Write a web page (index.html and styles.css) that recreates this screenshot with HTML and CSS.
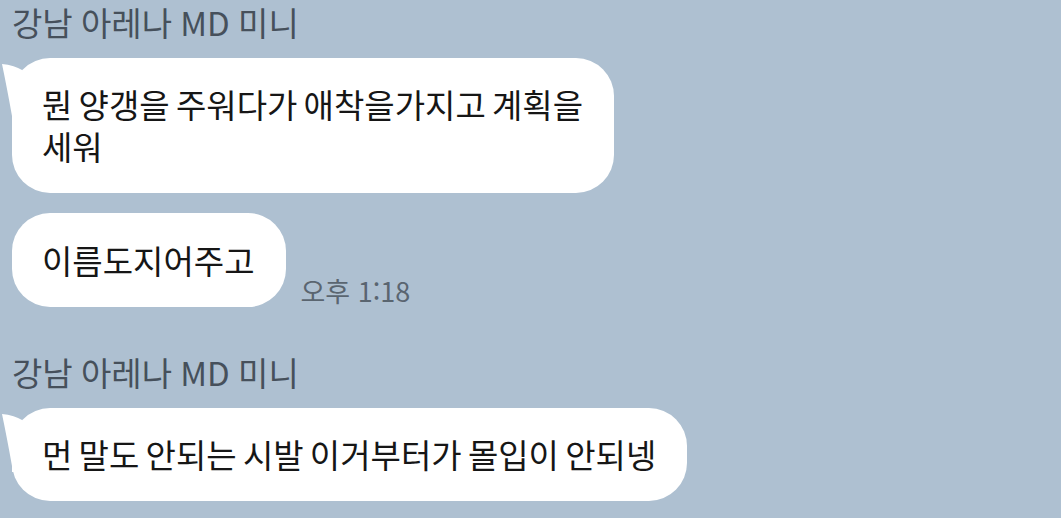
FILE: index.html
```html
<!DOCTYPE html>
<html lang="ko">
<head>
    <meta charset="UTF-8">
    <meta name="viewport" content="width=device-width, initial-scale=1.0">
    <title>채팅</title>
    <link rel="stylesheet" href="styles.css">
</head>
<body>

    <div class="chat">
        <div class="group">
            <div class="sender">강남 아레나 MD 미니</div>
            <div class="row">
                <div class="bubble first">
                    <svg class="tail" viewBox="0 0 40 70" width="40" height="70"><path d="M2 6 Q14 7 24 13 L34 34 L14 64 L12 64 L12 58 Q7 30 2 6 Z" fill="#fff"/></svg>
                    뭔 양갱을 주워다가 애착을가지고 계획을<br>세워
                </div>
            </div>
            <div class="row">
                <div class="bubble">이름도지어주고</div>
                <span class="time">오후 1:18</span>
            </div>
        </div>

        <div class="group">
            <div class="sender">강남 아레나 MD 미니</div>
            <div class="row">
                <div class="bubble first">
                    <svg class="tail" viewBox="0 0 40 70" width="40" height="70"><path d="M2 6 Q14 7 24 13 L34 34 L14 64 L12 64 L12 58 Q7 30 2 6 Z" fill="#fff"/></svg>
                    먼 말도 안되는 시발 이거부터가 몰입이 안되넹
                </div>
            </div>
        </div>
    </div>

</body>
</html>
```

FILE: styles.css
```css
/* Reset */
* {
    margin: 0;
    padding: 0;
    box-sizing: border-box;
}

body {
    font-family: "Noto Sans CJK KR", "Noto Sans", sans-serif;
    background-color: #aec0d1;
    height: 100vh;
    overflow: hidden;
}

.chat {
    display: flex;
    flex-direction: column;
    gap: 43px;
    padding-left: 12px;
}

.group {
    display: flex;
    flex-direction: column;
    gap: 20px;
}

/* Nombre del remitente */
.sender {
    font-size: 33px;
    line-height: 44px;
    color: #46505b;
    word-spacing: -1px;
    margin-bottom: -6px;
}

.row {
    display: flex;
    align-items: flex-end;
    gap: 15px;
}

/* Globo de mensaje */
.bubble {
    position: relative;
    background-color: #fff;
    color: #161616;
    font-size: 33px;
    line-height: 42px;
    word-spacing: -3px;
    padding: 26px 31px 26px 30px;
    border-radius: 38px;
}

.bubble.first {
    padding-top: 25px;
}

.tail {
    position: absolute;
    left: -12px;
    top: 0;
    display: block;
}

.time {
    font-size: 27px;
    line-height: 30px;
    color: #5a6570;
    padding-bottom: 1px;
}
```
